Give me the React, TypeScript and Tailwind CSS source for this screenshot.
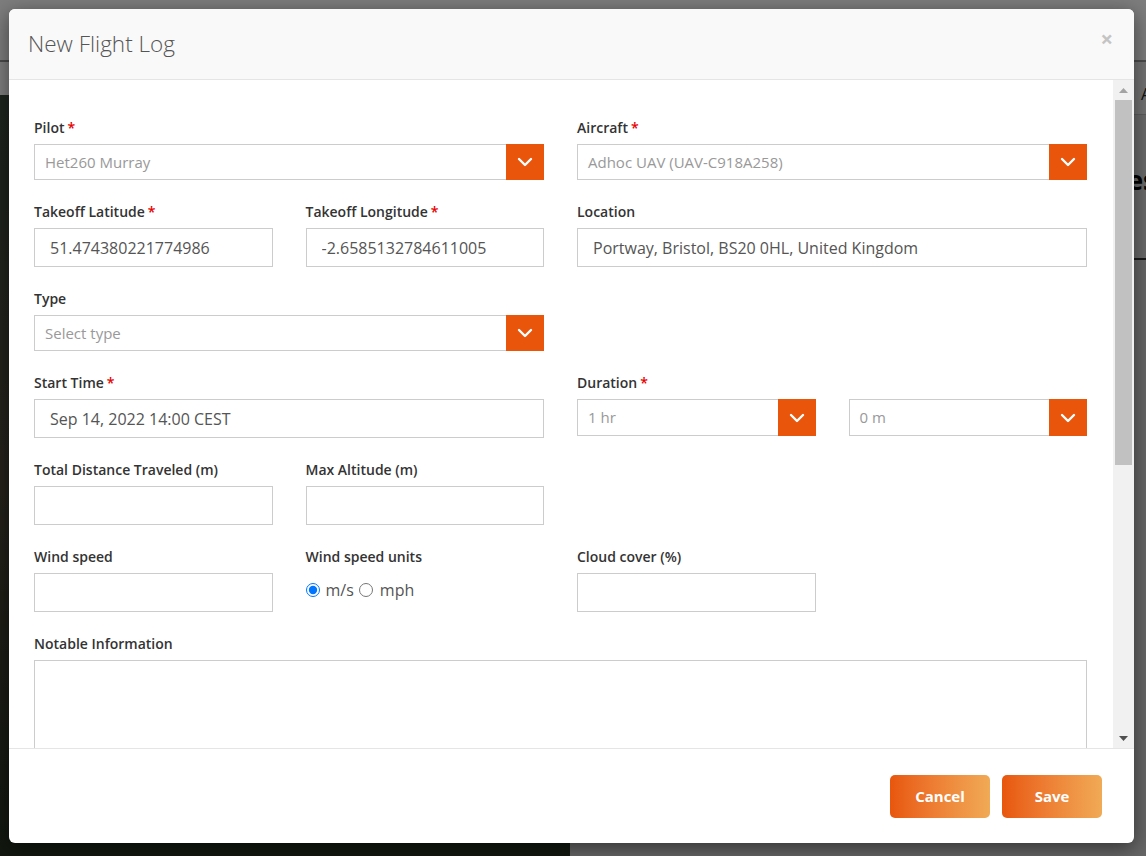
import clsx from "clsx";

const font = { fontFamily: '"Open Sans", "Liberation Sans", sans-serif' };

function Chevron() {
  return (
    <svg width="16" height="10" viewBox="0 0 16 10" fill="none">
      <path d="M2 2l6 6 6-6" stroke="white" strokeWidth="2.4" strokeLinecap="round" strokeLinejoin="round" />
    </svg>
  );
}

function Label({ text, required }: { text: string; required?: boolean }) {
  return (
    <label className="block h-5 mb-[6px] whitespace-nowrap text-[14px] leading-5 font-semibold text-[#333]">
      {text}
      {required && <span className="ml-[3px] text-[#e60000]">*</span>}
    </label>
  );
}

function Select({ value, tall }: { value: string; tall?: boolean }) {
  return (
    <div className={clsx("flex border border-[#ccc] bg-white", tall ? "h-[37px]" : "h-[36px]")}>
      <div className="flex flex-1 items-center pl-[10px] text-[15px] text-[#999]">{value}</div>
      <div className="-my-px -mr-px flex w-[38px] items-center justify-center bg-[#e8550b]">
        <Chevron />
      </div>
    </div>
  );
}

function Input({ value }: { value?: string }) {
  return (
    <input
      readOnly
      value={value ?? ""}
      className="block h-[39px] w-full border border-[#ccc] bg-white px-[15px] text-[16px] text-[#555] outline-none"
    />
  );
}

// classic scrollbar look for the dialog body
function Scrollbar() {
  return (
    <div className="flex w-[21px] shrink-0 flex-col bg-[#f1f1f1] pl-[2px] pr-[2px]">
      <div className="flex h-[20px] items-center justify-center">
        <svg width="9" height="5" viewBox="0 0 9 5">
          <path d="M4.5 0L9 5H0z" fill="#a3a3a3" />
        </svg>
      </div>
      <div className="h-[365px] bg-[#c1c1c1]" />
      <div className="flex-1" />
      <div className="flex h-[20px] items-center justify-center">
        <svg width="9" height="5" viewBox="0 0 9 5">
          <path d="M0 0h9L4.5 5z" fill="#505050" />
        </svg>
      </div>
    </div>
  );
}

export default function App() {
  return (
    <div className="relative h-[856px] w-[1146px] overflow-hidden bg-white" style={font}>
      {/* page behind the dialog */}
      <div className="flex h-full flex-col">
        <div className="h-[62px] border-b-2 border-[#999] bg-[#fafafa]" />
        <div className="flex flex-1">
          <div className="mt-[33px] w-[570px] shrink-0 bg-linear-to-b from-[#3a4a3c] via-[#4b4536] to-[#24301f]" />
          <div className="flex min-w-0 flex-1 flex-col bg-[#cdcdcd]">
            <div className="h-[53px] whitespace-nowrap border-b border-[#bbb] bg-[#e6e6e6] pl-[571px] pt-[20px] text-[16px] text-[#222]">
              Actions
            </div>
            <div className="flex h-[145px] justify-end overflow-hidden border-b-2 border-[#333] bg-[#d4d4d4] pt-[52px]">
              <span className="-mr-[10px] whitespace-nowrap text-[26px] font-bold leading-none text-black">
                Entries
              </span>
            </div>
          </div>
        </div>
      </div>
      <div className="absolute inset-0 bg-black/50" />

      {/* dialog */}
      <div className="absolute left-[9px] top-[9px] flex h-[834px] w-[1125px] flex-col overflow-hidden rounded-[6px] bg-white shadow-[0_5px_20px_rgba(0,0,0,0.5)]">
        <div className="flex h-[71px] shrink-0 items-center justify-between border-b border-[#e5e5e5] bg-[#f9f9f9] pl-[19px] pr-[21px]">
          <h4 className="text-[22.5px] font-light text-[#555]">New Flight Log</h4>
          <span className="-mt-[13px] text-[22px] font-bold leading-none text-[#c4c4c4]">×</span>
        </div>

        <div className="flex min-h-0 flex-1">
          <div className="flex-1 overflow-hidden pl-[25px] pt-[38px]">
            <div className="grid w-[1053px] grid-cols-4 gap-x-[33px] gap-y-[22px]">
              <div className="col-span-2">
                <Label text="Pilot" required />
                <Select value="Het260 Murray" />
              </div>
              <div className="col-span-2">
                <Label text="Aircraft" required />
                <Select value="Adhoc UAV (UAV-C918A258)" />
              </div>

              <div>
                <Label text="Takeoff Latitude" required />
                <Input value="51.474380221774986" />
              </div>
              <div>
                <Label text="Takeoff Longitude" required />
                <Input value="-2.6585132784611005" />
              </div>
              <div className="col-span-2">
                <Label text="Location" />
                <Input value="Portway, Bristol, BS20 0HL, United Kingdom" />
              </div>

              <div className="col-span-2">
                <Label text="Type" />
                <Select value="Select type" />
              </div>
              <div className="col-span-2" />

              <div className="col-span-2">
                <Label text="Start Time" required />
                <Input value="Sep 14, 2022 14:00 CEST" />
              </div>
              <div className="col-span-2">
                <Label text="Duration" required />
                <div className="grid grid-cols-2 gap-x-[33px]">
                  <Select value="1 hr" tall />
                  <Select value="0 m" tall />
                </div>
              </div>

              <div>
                <Label text="Total Distance Traveled (m)" />
                <Input />
              </div>
              <div>
                <Label text="Max Altitude (m)" />
                <Input />
              </div>
              <div className="col-span-2" />

              <div>
                <Label text="Wind speed" />
                <Input />
              </div>
              <div>
                <Label text="Wind speed units" />
                <div className="flex items-center pt-[5px] text-[16px] text-[#555]">
                  <input type="radio" name="units" defaultChecked className="m-0 mr-[6px] h-[14px] w-[14px]" />
                  <span>m/s</span>
                  <input type="radio" name="units" className="m-0 ml-[5px] mr-[7px] h-[14px] w-[14px]" />
                  <span>mph</span>
                </div>
              </div>
              <div>
                <Label text="Cloud cover (%)" />
                <Input />
              </div>
              <div />

              <div className="col-span-4">
                <Label text="Notable Information" />
                <textarea readOnly className="block h-[130px] w-full resize-none border border-[#ccc] outline-none" />
              </div>
            </div>
          </div>
          <Scrollbar />
        </div>

        <div className="flex h-[95px] shrink-0 items-start justify-end gap-[12px] border-t border-[#e5e5e5] pr-[32px] pt-[26px]">
          <button className="h-[43px] w-[100px] rounded-[5px] bg-linear-to-r from-[#e8560b] to-[#f0aa55] text-[15px] font-bold text-white">
            Cancel
          </button>
          <button className="h-[43px] w-[100px] rounded-[5px] bg-linear-to-r from-[#e8560b] to-[#f0aa55] text-[15px] font-bold text-white">
            Save
          </button>
        </div>
      </div>
    </div>
  );
}
